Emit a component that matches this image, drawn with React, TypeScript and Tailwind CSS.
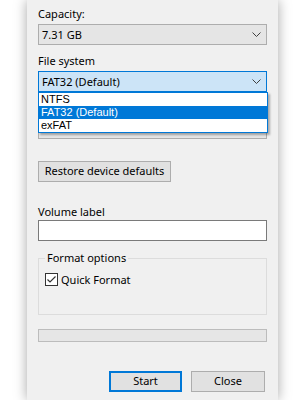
function Chevron() {
  return (
    <svg width="9" height="5" viewBox="0 0 9 5" className="block">
      <path d="M0.5 0.5 L4.5 4.5 L8.5 0.5" fill="none" stroke="#404040" strokeWidth="1" />
    </svg>
  );
}

function Combo({ value, focused }: { value: string; focused?: boolean }) {
  return (
    <div
      className={
        focused
          ? "flex items-center justify-between h-[21px] border border-[#0078d7] bg-[#cce4f7] pl-[3px] pr-[5px]"
          : "flex items-center justify-between h-[21px] border border-[#adadad] bg-[#e5e5e5] pl-[3px] pr-[5px]"
      }
    >
      <span className="leading-none text-black">{value}</span>
      <Chevron />
    </div>
  );
}

export default function App() {
  return (
    <div className="w-[303px] h-[400px] bg-white overflow-hidden" style={{ fontFamily: '"Noto Sans", "Liberation Sans", sans-serif' }}>
      <div className="ml-[27px] w-[251px] h-[400px] bg-[#f0f0f0] shadow-[0_0_12px_rgba(0,0,0,0.35)] px-[11px] pt-[6px] text-[11px] text-black flex flex-col">
        <div className="h-[16px] leading-[16px]">Capacity:</div>
        <div className="mt-[2px]">
          <Combo value="7.31 GB" />
        </div>

        <div className="mt-[8px] h-[16px] leading-[16px]">File system</div>
        <div className="mt-[2px] relative">
          <Combo value="FAT32 (Default)" focused />
          <div
            className="absolute left-0 top-[21px] w-[230px] z-10 border border-[#0078d7] bg-white shadow-[2px_2px_2px_rgba(0,0,0,0.3)] leading-[13px] text-[11px]"
            style={{ fontFamily: '"Liberation Sans", Arial, sans-serif' }}
          >
            <div className="h-[13px] pl-[2px]">NTFS</div>
            <div className="h-[13px] pl-[2px] bg-[#0078d7] text-white">FAT32 (Default)</div>
            <div className="h-[13px] pl-[2px]">exFAT</div>
          </div>
        </div>

        {/* allocation unit size row, hidden behind the open list */}
        <div className="mt-[8px] h-[16px]"></div>
        <div className="mt-[2px] h-[21px] border border-[#adadad] bg-[#e5e5e5]"></div>

        <div className="mt-[22px] w-[133px] h-[21px] border border-[#adadad] bg-[#e1e1e1] flex items-center justify-center">
          Restore device defaults
        </div>

        <div className="mt-[22px] h-[16px] leading-[16px]">Volume label</div>
        <div className="h-[21px] border border-[#7a7a7a] bg-white"></div>

        <div className="mt-[17px] h-[57px] border border-[#dcdcdc] relative">
          <div className="absolute left-[6px] top-[-9px] px-[2px] bg-[#f0f0f0] leading-[16px]">Format options</div>
          <div className="mt-[14px] ml-[6px] h-[13px] flex items-center gap-[3px]">
            <div className="w-[13px] h-[13px] border border-[#333333] bg-white flex items-center justify-center">
              <svg width="11" height="11" viewBox="0 0 11 11" className="block">
                <path d="M1.5 5.5 L4 8 L9.5 2.5" fill="none" stroke="#333333" strokeWidth="1.2" />
              </svg>
            </div>
            <span className="leading-[16px]">Quick Format</span>
          </div>
        </div>

        <div className="mt-[14px] h-[13px] border border-[#bcbcbc] bg-[#e6e6e6]"></div>

        <div className="mt-[29px] flex justify-end gap-[9px] pr-[2px]">
          <div className="w-[73px] h-[21px] border-2 border-[#0078d7] bg-[#e1e1e1] flex items-center justify-center">Start</div>
          <div className="w-[74px] h-[21px] border border-[#adadad] bg-[#e1e1e1] flex items-center justify-center">Close</div>
        </div>
      </div>
    </div>
  );
}
